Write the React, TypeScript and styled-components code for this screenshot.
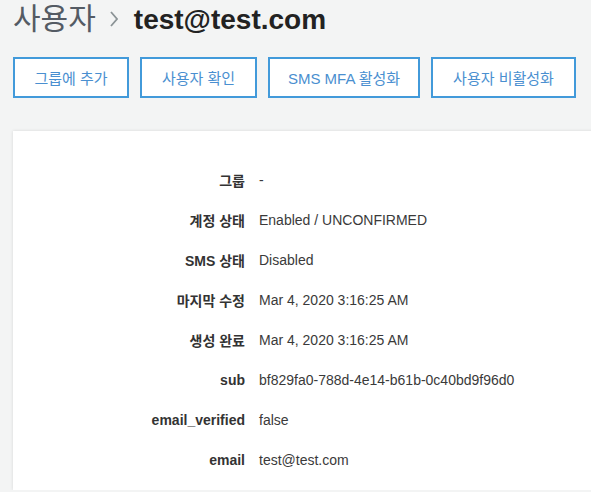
import React from "react";
import styled, { createGlobalStyle } from "styled-components";

const GlobalStyle = createGlobalStyle`
  html, body {
    margin: 0;
    padding: 0;
    background: #f3f4f4;
    overflow: hidden;
  }
  body {
    font-family: "Liberation Sans", Arial, "Noto Sans CJK KR", sans-serif;
    color: #333;
  }
`;

const Page = styled.div`
  width: 640px;
  padding: 0 13px;
`;

const Heading = styled.h1`
  display: flex;
  align-items: baseline;
  margin: 0;
  height: 38px;
  font-size: 28px;
  line-height: 38px;
  font-weight: normal;
`;

const Crumb = styled.span`
  color: #545b64;
  font-size: 30px;
`;

const Chevron = styled.svg`
  width: 8px;
  height: 16px;
  margin: 0 16px 0 14px;
  align-self: center;
`;

const Current = styled.span`
  font-weight: bold;
  color: #222;
`;

const Toolbar = styled.div`
  display: flex;
  gap: 11px;
  margin-top: 19px;
`;

const ActionButton = styled.button<{ $width: number }>`
  width: ${(p) => p.$width}px;
  height: 41px;
  padding: 0;
  background: #fff;
  border: 2px solid #429ada;
  border-radius: 0;
  color: #4a8fd0;
  font-family: "Liberation Sans", Arial, "Noto Sans CJK KR", sans-serif;
  font-size: 15px;
  cursor: pointer;
`;

const Card = styled.section`
  margin-top: 33px;
  background: #fff;
  box-shadow: 0 0 3px rgba(0, 0, 0, 0.12);
  padding: 29px 0 10px;
`;

const Row = styled.div`
  display: grid;
  grid-template-columns: 232px 1fr;
  column-gap: 14px;
  height: 40px;
  align-items: center;
  font-size: 14px;
`;

const Label = styled.div`
  text-align: right;
  font-weight: bold;
  color: #333;
`;

const Value = styled.div`
  color: #3a3a3a;
`;

const actions = [
  { label: "그룹에 추가", width: 116 },
  { label: "사용자 확인", width: 117 },
  { label: "SMS MFA 활성화", width: 152 },
  { label: "사용자 비활성화", width: 145 },
];

const details = [
  ["그룹", "-"],
  ["계정 상태", "Enabled / UNCONFIRMED"],
  ["SMS 상태", "Disabled"],
  ["마지막 수정", "Mar 4, 2020 3:16:25 AM"],
  ["생성 완료", "Mar 4, 2020 3:16:25 AM"],
  ["sub", "bf829fa0-788d-4e14-b61b-0c40bd9f96d0"],
  ["email_verified", "false"],
  ["email", "test@test.com"],
];

const App = () => {
  return (
    <>
      <GlobalStyle />
      <Page>
        <Heading>
          <Crumb>사용자</Crumb>
          <Chevron viewBox="0 0 8 16">
            <path d="M1 1 L7 8 L1 15" fill="none" stroke="#8b9396" strokeWidth="1.8" />
          </Chevron>
          <Current>test@test.com</Current>
        </Heading>
        <Toolbar>
          {actions.map((a) => (
            <ActionButton key={a.label} $width={a.width}>
              {a.label}
            </ActionButton>
          ))}
        </Toolbar>
        <Card>
          {details.map(([label, value]) => (
            <Row key={label}>
              <Label>{label}</Label>
              <Value>{value}</Value>
            </Row>
          ))}
        </Card>
      </Page>
    </>
  );
};

export default App;
